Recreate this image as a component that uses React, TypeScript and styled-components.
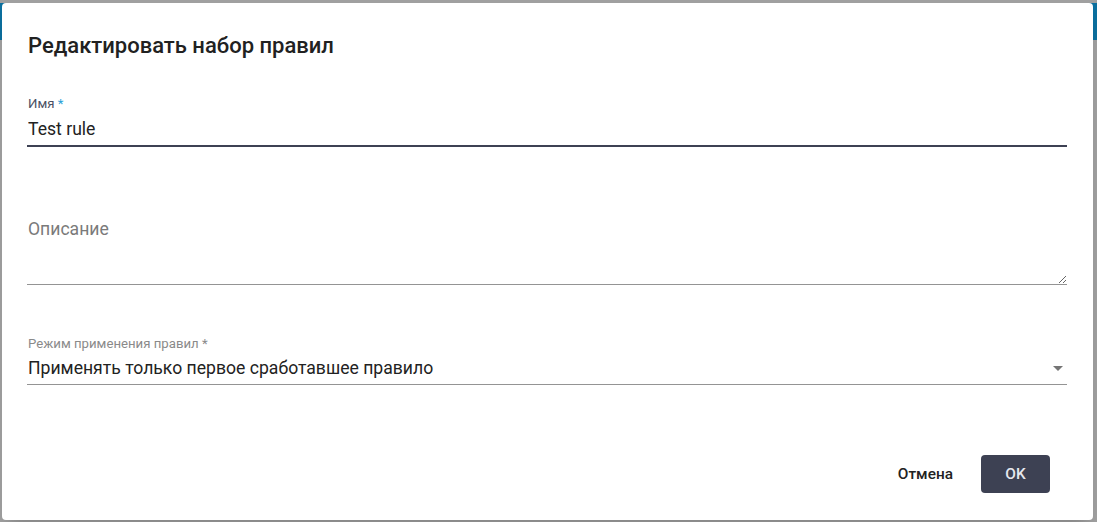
import React from "react";
import styled, { createGlobalStyle } from "styled-components";

const Global = createGlobalStyle`
  html, body { margin: 0; padding: 0; }
  body { font-family: Roboto, "Noto Sans", Arial, sans-serif; }
  * { box-sizing: border-box; }
`;

const Backdrop = styled.div`
  width: 1097px;
  height: 522px;
  overflow: hidden;
  padding: 3px 4px 0 2px;
  background: linear-gradient(
    to bottom,
    #a0a0a0 0,
    #a0a0a0 3px,
    #0b6f9e 3px,
    #0b6f9e 40px,
    #a0a0a0 40px
  );
`;

const Dialog = styled.div`
  width: 1091px;
  height: 517px;
  background: #ffffff;
  border-radius: 4px;
  padding: 27px 26px 0 25px;
  display: flex;
  flex-direction: column;
  box-shadow: 0 11px 15px -7px rgba(0, 0, 0, 0.2);
`;

const Title = styled.h2`
  margin: 0 0 0 1px;
  font-size: 22px;
  line-height: 32px;
  font-weight: 500;
  color: #212121;
`;

const Field = styled.div<{ $top: number }>`
  display: flex;
  flex-direction: column;
  margin-top: ${(p) => p.$top}px;
`;

const Label = styled.label<{ $focused?: boolean }>`
  font-size: 13.2px;
  line-height: 16px;
  padding-left: 1px;
  color: ${(p) => (p.$focused ? "#4b5064" : "#8a8a8a")};
`;

const Star = styled.span<{ $focused?: boolean }>`
  color: ${(p) => (p.$focused ? "#2a9fd8" : "#8a8a8a")};
`;

const Input = styled.input`
  margin-top: 5px;
  border: 0;
  border-bottom: 2px solid #3d4153;
  padding: 0 0 3.5px 1px;
  font: inherit;
  font-size: 17.6px;
  line-height: 24px;
  height: 29.5px;
  color: #222;
  outline: none;
  background: transparent;
`;

const TextArea = styled.textarea`
  display: block;
  width: 100%;
  height: 71px;
  border: 0;
  border-bottom: 1px solid #949494;
  padding: 3px 0 0 1px;
  font: inherit;
  font-size: 17.6px;
  line-height: 24px;
  color: #222;
  outline: none;
  resize: vertical;
  background: transparent;
  &::placeholder {
    color: #7a7a7a;
    opacity: 1;
  }
`;

const SelectBox = styled.div`
  margin-top: 4px;
  display: flex;
  align-items: center;
  justify-content: space-between;
  border-bottom: 1px solid #949494;
  padding: 0 0 4px 1px;
  height: 29px;
`;

const SelectValue = styled.span`
  font-size: 17.6px;
  line-height: 24px;
  color: #222;
`;

const Arrow = styled.svg`
  width: 24px;
  height: 24px;
  margin-right: -3px;
  fill: #757575;
`;

const Actions = styled.div`
  margin-top: auto;
  margin-bottom: 27px;
  margin-right: 17px;
  display: flex;
  justify-content: flex-end;
  align-items: center;
  gap: 12px;
`;

const Button = styled.button<{ $primary?: boolean }>`
  height: 38px;
  min-width: ${(p) => (p.$primary ? "69px" : "86px")};
  padding: 0 16px;
  border: 0;
  border-radius: 4px;
  font-family: Roboto, "Noto Sans", Arial, sans-serif;
  font-size: 15.4px;
  font-weight: 500;
  cursor: pointer;
  background: ${(p) => (p.$primary ? "#3d4153" : "transparent")};
  color: ${(p) => (p.$primary ? "#e6e8ee" : "#222")};
`;

export default function App() {
  return (
    <>
      <Global />
      <Backdrop>
        <Dialog>
          <Title>Редактировать набор правил</Title>
          <Field $top={34}>
            <Label $focused>
              Имя <Star $focused>*</Star>
            </Label>
            <Input defaultValue="Test rule" />
          </Field>
          <Field $top={67}>
            <TextArea placeholder="Описание" />
          </Field>
          <Field $top={51}>
            <Label>Режим применения правил *</Label>
            <SelectBox>
              <SelectValue>Применять только первое сработавшее правило</SelectValue>
              <Arrow viewBox="0 0 24 24">
                <path d="M7 10l5 5 5-5z" />
              </Arrow>
            </SelectBox>
          </Field>
          <Actions>
            <Button>Отмена</Button>
            <Button $primary>OK</Button>
          </Actions>
        </Dialog>
      </Backdrop>
    </>
  );
}
